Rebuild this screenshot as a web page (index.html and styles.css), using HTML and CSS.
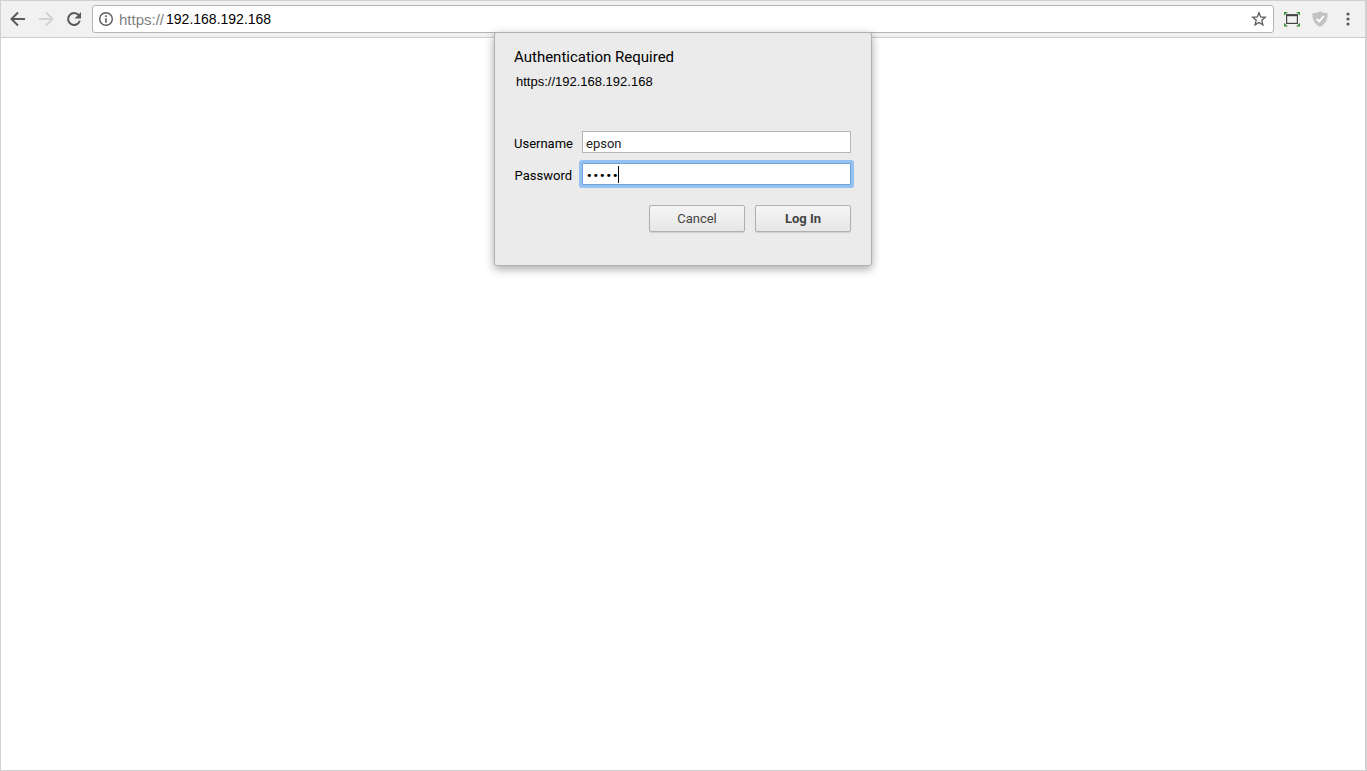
FILE: index.html
```html
<!DOCTYPE html>
<html lang="en">
<head>
    <meta charset="UTF-8">
    <meta name="viewport" content="width=device-width, initial-scale=1.0">
    <title>Authentication Required</title>
    <link rel="stylesheet" href="styles.css">
</head>
<body>

    <div class="browser">
        <div class="toolbar">
            <button type="button" class="icon-button" aria-label="Back">
                <svg width="16" height="16" viewBox="0 0 16 16" fill="none" stroke="#5a5a5a" stroke-width="2">
                    <path d="M15 8H2.5M8 1.5L1.5 8L8 14.5"/>
                </svg>
            </button>
            <button type="button" class="icon-button" aria-label="Forward" disabled>
                <svg width="16" height="16" viewBox="0 0 16 16" fill="none" stroke="#d2d2d2" stroke-width="2">
                    <path d="M1 8H13.5M8 1.5L14.5 8L8 14.5"/>
                </svg>
            </button>
            <button type="button" class="icon-button" aria-label="Reload">
                <svg width="16" height="16" viewBox="0 0 16 16">
                    <path d="M12.8 4.2A6 6 0 1 0 13.8 9.8" fill="none" stroke="#5a5a5a" stroke-width="2"/>
                    <path d="M15 1V7.5H8.5Z" fill="#5a5a5a"/>
                </svg>
            </button>

            <div class="address-bar">
                <svg width="16" height="16" viewBox="0 0 16 16">
                    <circle cx="8" cy="8" r="6.3" fill="none" stroke="#5a5a5a" stroke-width="1.4"/>
                    <path d="M7.2 4.3H8.8V5.9H7.2ZM7.2 7.2H8.8V11.8H7.2Z" fill="#5a5a5a"/>
                </svg>
                <label class="scheme" for="address">https://</label>
                <input type="text" id="address" class="address" value="192.168.192.168">
                <button type="button" class="icon-button" aria-label="Bookmark this page">
                    <svg width="16" height="16" viewBox="0 0 16 16" fill="none" stroke="#5a5a5a" stroke-width="1.3">
                        <path d="M8 1.8L9.7 6L14.3 6.3L10.8 9.3L11.9 13.8L8 11.4L4.1 13.8L5.2 9.3L1.7 6.3L6.3 6Z"/>
                    </svg>
                </button>
            </div>

            <button type="button" class="icon-button" aria-label="Resize window">
                <svg width="16" height="16" viewBox="0 0 16 16">
                    <path d="M0 1H4L0 4.6ZM16 1H12L16 4.6ZM0 15.4H4L0 11.8ZM16 15.4H12L16 11.8Z" fill="#3f9142"/>
                    <rect x="2.6" y="4" width="10.8" height="8.4" fill="#f1f1f1" stroke="#444" stroke-width="1.2"/>
                    <path d="M2 4.2H14" stroke="#444" stroke-width="2"/>
                </svg>
            </button>
            <button type="button" class="icon-button" aria-label="Blocker">
                <svg width="16" height="16" viewBox="0 0 16 16">
                    <path d="M8 0.2C10 1.6 12.8 2 15.6 2C15.8 8.6 13.8 13.2 8 15.8C2.2 13.2 0.2 8.6 0.4 2C3.2 2 6 1.6 8 0.2Z" fill="#c2c2c2"/>
                    <path d="M4.6 7.8L7.2 10.4L11.8 5" fill="none" stroke="#fff" stroke-width="1.8"/>
                </svg>
            </button>
            <button type="button" class="icon-button" aria-label="Menu">
                <svg width="16" height="16" viewBox="0 0 16 16" fill="#5a5a5a">
                    <circle cx="8" cy="3" r="1.6"/>
                    <circle cx="8" cy="8" r="1.6"/>
                    <circle cx="8" cy="13" r="1.6"/>
                </svg>
            </button>
        </div>

        <div class="page">
            <form class="dialog" role="dialog" aria-labelledby="dialog-title">
                <h1 id="dialog-title">Authentication Required</h1>
                <p class="origin">https://192.168.192.168</p>

                <div class="fields">
                    <label for="username">Username</label>
                    <input type="text" id="username" value="epson">
                    <label for="password">Password</label>
                    <div class="password-field">
                        <input type="password" id="password" class="focused" value="epson">
                        <span class="caret"></span>
                    </div>
                </div>

                <div class="buttons">
                    <button type="button">Cancel</button>
                    <button type="submit" class="primary">Log In</button>
                </div>
            </form>
        </div>
    </div>

</body>
</html>
```

FILE: styles.css
```css
* {
    box-sizing: border-box;
}

body {
    margin: 0;
    background-color: #fff;
    font-family: Roboto, "Liberation Sans", sans-serif;
    font-size: 13px;
    color: #000;
}

.browser {
    display: flex;
    flex-direction: column;
    min-height: 100vh;
    border: 1px solid #d0d0d0;
    border-width: 1px 2px 1px 1px;
}

.toolbar {
    display: flex;
    align-items: center;
    gap: 12px;
    height: 37px;
    padding: 0 9px;
    background-color: #f1f1f1;
    border-bottom: 1px solid #cdcdcd;
}

.icon-button {
    display: flex;
    flex: none;
    padding: 0;
    border: 0;
    background: none;
}

.address-bar {
    display: flex;
    flex: 1;
    align-items: center;
    height: 28px;
    margin-right: -2px;
    margin-left: -2px;
    padding: 0 6px 0 5px;
    background-color: #fff;
    border: 1px solid #b4b4b4;
    border-radius: 3px;
}

.scheme,
.address {
    font-family: "Liberation Sans", Arial, sans-serif;
}

.scheme {
    margin-left: 5px;
    font-size: 15px;
    color: #808080;
}

.address {
    flex: 1;
    min-width: 0;
    padding: 0 0 0 2px;
    border: 0;
    outline: none;
    font-size: 14px;
    color: #000;
}

.page {
    position: relative;
    flex: 1;
}

/* hangs from the toolbar, over the page */
.dialog {
    position: absolute;
    top: -6px;
    left: 50%;
    width: 378px;
    padding: 15px 20px 33px 19px;
    transform: translateX(-50%);
    background-color: #ebebeb;
    border: 1px solid #b0b0b0;
    border-radius: 3px;
    box-shadow: 0 3px 10px rgba(0, 0, 0, 0.35);
}

.dialog h1 {
    margin: 0;
    font-size: 15px;
    font-weight: normal;
    line-height: 18px;
}

.origin {
    margin: 8px 0 41px 2px;
    font-family: "Liberation Sans", Arial, sans-serif;
    line-height: 16px;
}

.fields {
    display: grid;
    grid-template-columns: 59px 1fr;
    gap: 10px 9px;
    align-items: center;
}

.fields label {
    padding: 2px 1px 0 0;
    text-align: right;
    white-space: nowrap;
}

.fields input {
    display: block;
    width: 100%;
    height: 22px;
    padding: 2px 3px 0;
    border: 1px solid #b5b5b5;
    outline: none;
    background-color: #fff;
    font-family: inherit;
    font-size: 13px;
    color: #222;
}

.fields .focused {
    border-color: #6fa3db;
    box-shadow: 0 0 0 3px #95c1f1;
    border-radius: 1px;
    font-family: "DejaVu Sans", sans-serif;
    font-size: 11px;
    color: #000;
}

.password-field {
    position: relative;
}

.caret {
    position: absolute;
    top: 3px;
    left: 36px;
    width: 1px;
    height: 17px;
    background-color: #000;
}

.buttons {
    display: flex;
    justify-content: flex-end;
    gap: 10px;
    margin-top: 20px;
}

.buttons button {
    width: 96px;
    height: 27px;
    padding: 0;
    border: 1px solid #b0b0b0;
    border-radius: 2px;
    background: linear-gradient(#f5f5f5, #e6e6e6);
    box-shadow: 0 1px 1px rgba(0, 0, 0, 0.12);
    font-family: inherit;
    font-size: 13px;
    color: #444;
}

.buttons .primary {
    font-weight: bold;
}
```
